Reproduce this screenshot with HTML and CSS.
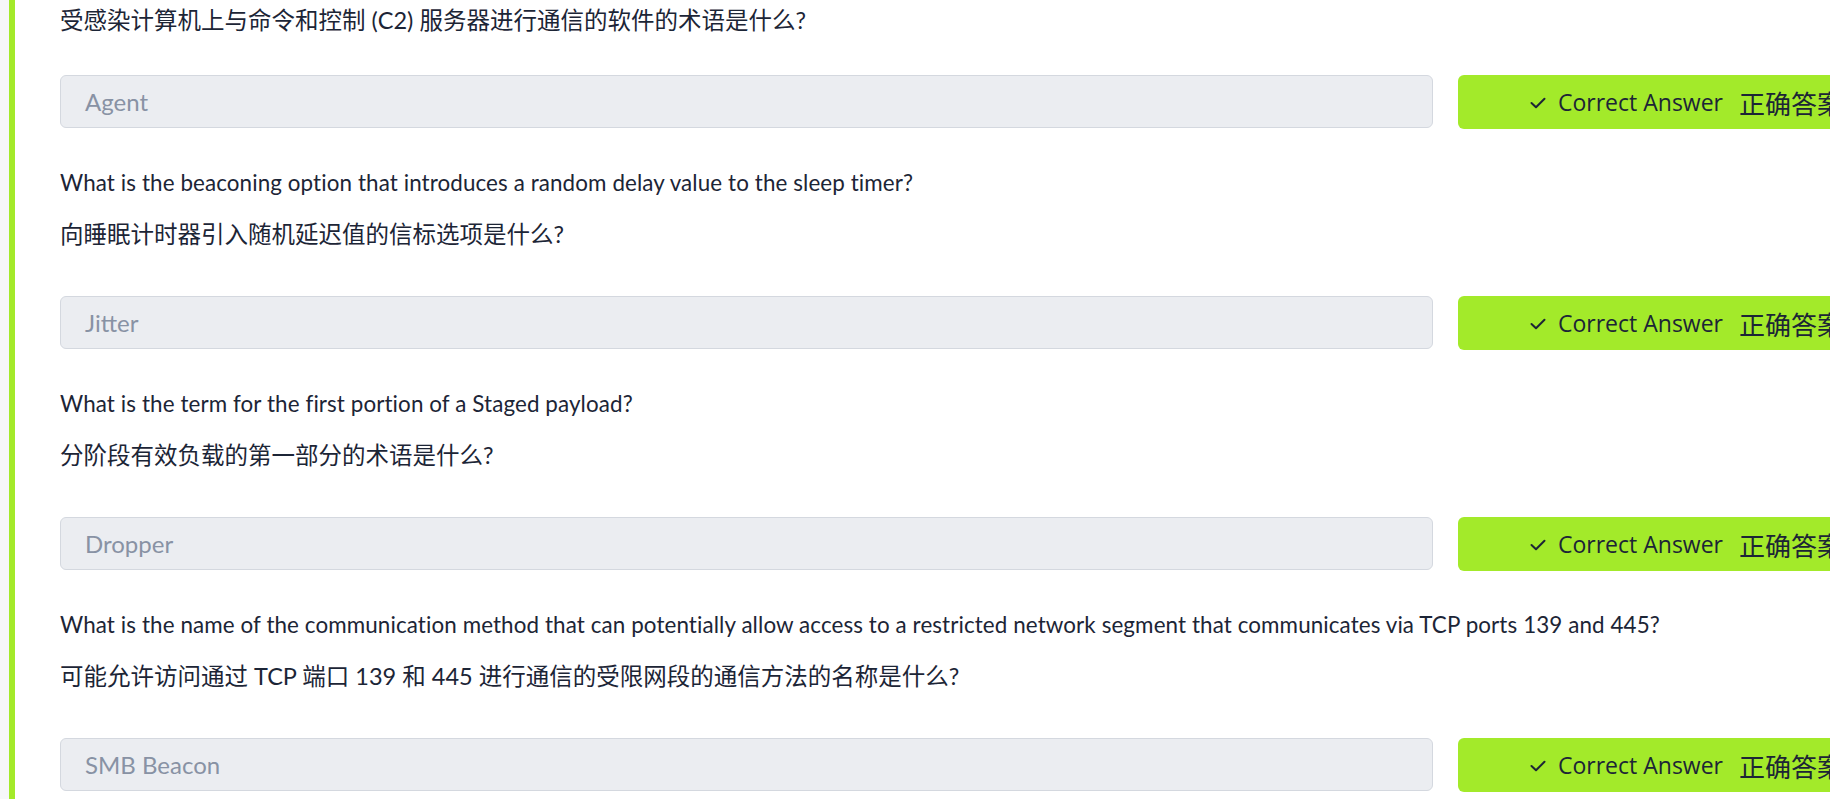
FILE: index.html
```html
<!DOCTYPE html>
<html lang="zh-CN">
<head>
<meta charset="utf-8">
<title>Questions</title>
<link rel="stylesheet" href="styles.css">
</head>
<body>
<div class="page">
  <div class="card">
    <section class="task">
      <p class="q-zh first">受感染计算机上与命令和控制 (C2) 服务器进行通信的软件的术语是什么?</p>
      <div class="answer-row first">
        <div class="answer-input">Agent</div>
        <div class="answer-btn"><svg class="check" viewBox="0 0 16 12" width="16" height="12"><path d="M1.5 6 L6 10.3 L14.5 1.8" fill="none" stroke="currentColor" stroke-width="2" stroke-linecap="round" stroke-linejoin="round"/></svg><span class="btn-en">Correct Answer</span><span class="btn-zh">正确答案</span></div>
      </div>
    </section>
    <section class="task">
      <p class="q-en">What is the beaconing option that introduces a random delay value to the sleep timer?</p>
      <p class="q-zh">向睡眠计时器引入随机延迟值的信标选项是什么?</p>
      <div class="answer-row">
        <div class="answer-input">Jitter</div>
        <div class="answer-btn"><svg class="check" viewBox="0 0 16 12" width="16" height="12"><path d="M1.5 6 L6 10.3 L14.5 1.8" fill="none" stroke="currentColor" stroke-width="2" stroke-linecap="round" stroke-linejoin="round"/></svg><span class="btn-en">Correct Answer</span><span class="btn-zh">正确答案</span></div>
      </div>
    </section>
    <section class="task">
      <p class="q-en">What is the term for the first portion of a Staged payload?</p>
      <p class="q-zh">分阶段有效负载的第一部分的术语是什么?</p>
      <div class="answer-row">
        <div class="answer-input">Dropper</div>
        <div class="answer-btn"><svg class="check" viewBox="0 0 16 12" width="16" height="12"><path d="M1.5 6 L6 10.3 L14.5 1.8" fill="none" stroke="currentColor" stroke-width="2" stroke-linecap="round" stroke-linejoin="round"/></svg><span class="btn-en">Correct Answer</span><span class="btn-zh">正确答案</span></div>
      </div>
    </section>
    <section class="task">
      <p class="q-en">What is the name of the communication method that can potentially allow access to a restricted network segment that communicates via TCP ports 139 and 445?</p>
      <p class="q-zh">可能允许访问通过 TCP 端口 139 和 445 进行通信的受限网段的通信方法的名称是什么?</p>
      <div class="answer-row">
        <div class="answer-input">SMB Beacon</div>
        <div class="answer-btn"><svg class="check" viewBox="0 0 16 12" width="16" height="12"><path d="M1.5 6 L6 10.3 L14.5 1.8" fill="none" stroke="currentColor" stroke-width="2" stroke-linecap="round" stroke-linejoin="round"/></svg><span class="btn-en">Correct Answer</span><span class="btn-zh">正确答案</span></div>
      </div>
    </section>
  </div>
</div>
</body>
</html>
```

FILE: styles.css
```css
html, body {
  margin: 0;
  padding: 0;
  height: 100%;
  overflow: hidden;
  background: #ffffff;
}

.page {
  display: flex;
  padding-left: 9px;
  background: #f6f7f9;
  min-height: 100%;
}

.card {
  flex: 1;
  background: #ffffff;
  border-left: 6px solid #a3ea2a;
  padding: 3px 0 0 45px;
  min-width: 0;
}

.task {
  display: flex;
  flex-direction: column;
}

.q-en {
  margin: 39px 0 0;
  font-family: Lato, "Noto Sans CJK SC", sans-serif;
  font-size: 22.4px;
  letter-spacing: 0.1px;
  line-height: 30px;
  color: #1c2536;
}

.q-zh {
  margin: 19px 0 0;
  font-family: Lato, "Noto Sans CJK SC", sans-serif;
  font-size: 23.5px;
  line-height: 34px;
  color: #1c2536;
}

.q-zh.first {
  margin-top: 0;
}

.answer-row {
  display: flex;
  align-items: flex-start;
  gap: 25px;
  margin-top: 45px;
  width: 1800px;
}

.answer-row.first {
  margin-top: 38px;
}

.answer-input {
  width: 1373px;
  height: 53px;
  box-sizing: border-box;
  flex: none;
  display: flex;
  align-items: center;
  padding-left: 24px;
  background: #ebedf1;
  border: 1px solid #d4d8df;
  border-radius: 6px;
  font-family: Lato, sans-serif;
  font-size: 24px;
  color: #8892a4;
}

.answer-btn {
  flex: none;
  height: 54px;
  box-sizing: border-box;
  display: flex;
  align-items: center;
  padding: 0 0 0 72px;
  width: 460px;
  background: #a3ea2a;
  border-radius: 6px;
  color: #1c2536;
  white-space: nowrap;
}

.check {
  margin-right: 12px;
  margin-top: 1px;
}

.btn-en {
  font-family: "Open Sans", "Noto Sans", sans-serif;
  font-size: 23px;
}

.btn-zh {
  margin-left: 16px;
  font-family: "Noto Sans CJK SC", sans-serif;
  font-size: 26px;
}
```
